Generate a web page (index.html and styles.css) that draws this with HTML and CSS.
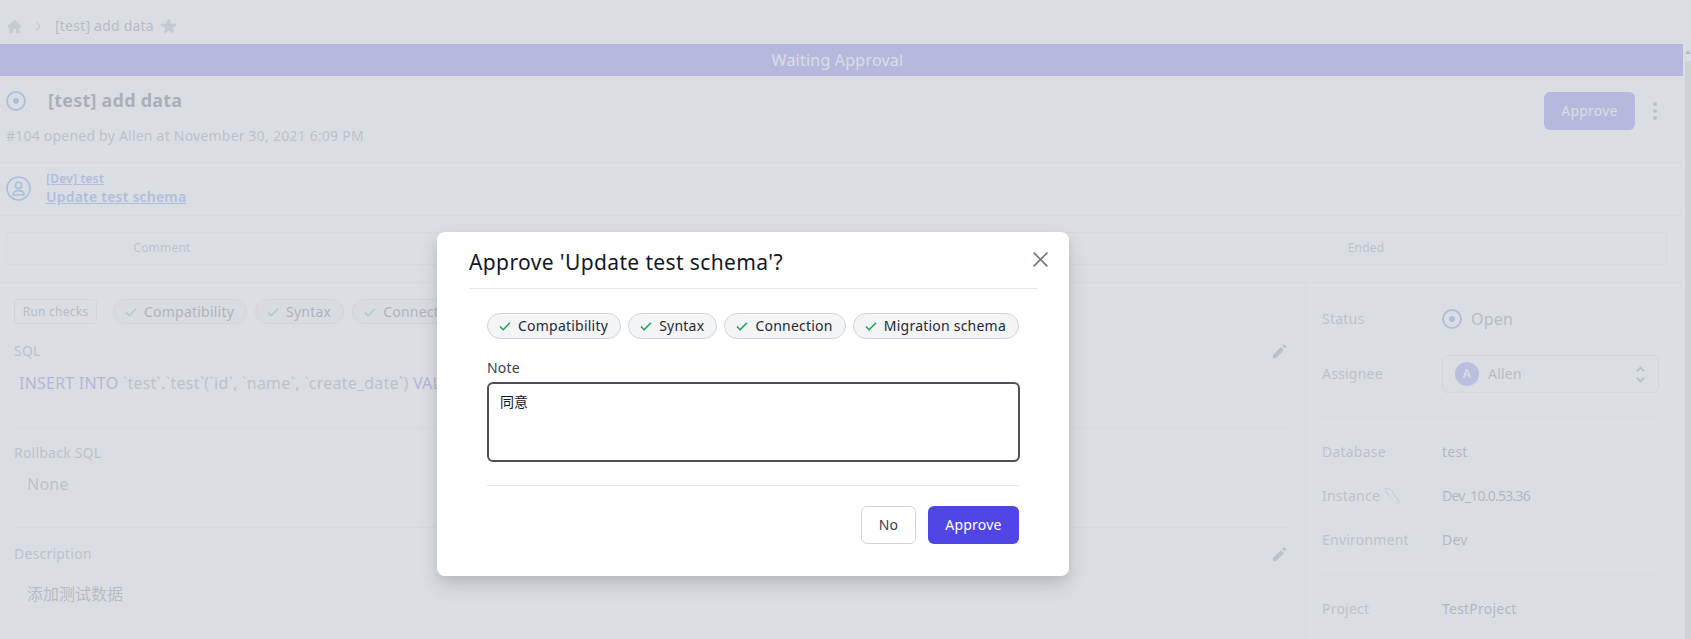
FILE: index.html
```html
<!DOCTYPE html>
<html lang="en">
<head>
<meta charset="utf-8">
<title>[test] add data</title>
<link rel="stylesheet" href="styles.css">
</head>
<body>
<div class="page">
  <nav class="crumbs">
    <svg class="home" viewBox="0 0 20 20" fill="currentColor"><path d="M10.7 2.3a1 1 0 0 0-1.4 0l-7 7A1 1 0 0 0 3 11h1v6a1 1 0 0 0 1 1h2a1 1 0 0 0 1-1v-3a1 1 0 0 1 1-1h2a1 1 0 0 1 1 1v3a1 1 0 0 0 1 1h2a1 1 0 0 0 1-1v-6h1a1 1 0 0 0 .7-1.7l-7-7z"/></svg>
    <svg class="chev" viewBox="0 0 6 10" fill="none" stroke="currentColor" stroke-width="1.2"><path d="M1 1l4 4-4 4"/></svg>
    <span class="crumb-text">[test] add data</span>
    <svg class="star" viewBox="0 0 20 20" fill="currentColor"><path d="M9.05 2.93c.3-.92 1.6-.92 1.9 0l1.27 3.91a1 1 0 0 0 .95.69h4.11c.97 0 1.37 1.24.59 1.81l-3.33 2.42a1 1 0 0 0-.36 1.12l1.27 3.91c.3.92-.76 1.69-1.54 1.12l-3.32-2.42a1 1 0 0 0-1.18 0l-3.32 2.42c-.78.57-1.84-.2-1.54-1.12l1.27-3.91a1 1 0 0 0-.36-1.12L1.13 9.34c-.78-.57-.38-1.81.59-1.81h4.11a1 1 0 0 0 .95-.69l1.27-3.91z"/></svg>
  </nav>
  <div class="frame">
    <main class="main">
      <div class="banner">Waiting Approval</div>
      <header class="head">
        <div class="head-left">
          <div class="title-row">
            <svg class="status-icon" viewBox="0 0 20 20" fill="none"><circle cx="10" cy="10" r="9" stroke="currentColor" stroke-width="2"/><circle cx="10" cy="10" r="3" fill="currentColor"/></svg>
            <h1 class="title">[test] add data</h1>
          </div>
          <p class="sub">#104 opened by Allen at November 30, 2021 6:09 PM</p>
        </div>
        <div class="head-actions">
          <button class="btn-primary">Approve</button>
          <svg class="dots" viewBox="0 0 4 18" fill="currentColor"><circle cx="2" cy="2" r="2"/><circle cx="2" cy="9" r="2"/><circle cx="2" cy="16" r="2"/></svg>
        </div>
      </header>
      <div class="linkrow">
        <svg class="person" viewBox="0 0 24 24" fill="none" stroke="currentColor" stroke-width="1.6"><circle cx="12" cy="12" r="11"/><circle cx="12" cy="9" r="3"/><path d="M6.8 18.2c0-2.8 2-4.2 5.2-4.2s5.2 1.400 5.2 4.200z"/></svg>
        <div class="links">
          <a class="link-small">[Dev] test</a>
          <a class="link-big">Update test schema</a>
        </div>
      </div>
      <section class="stepwrap">
        <div class="steps">
          <span class="step">Comment</span>
          <span class="step"></span>
          <span class="step">Ended</span>
        </div>
      </section>
      <div class="content">
        <div class="left">
          <div class="checks">
            <button class="btn-run">Run checks</button>
            <span class="chip"><svg class="check" viewBox="0 0 14 14" fill="none" stroke="currentColor" stroke-width="1.4"><path d="M2 7.500l3.200 3.200L12 3.800"/></svg>Compatibility</span>
            <span class="chip"><svg class="check" viewBox="0 0 14 14" fill="none" stroke="currentColor" stroke-width="1.4"><path d="M2 7.500l3.200 3.200L12 3.800"/></svg>Syntax</span>
            <span class="chip"><svg class="check" viewBox="0 0 14 14" fill="none" stroke="currentColor" stroke-width="1.4"><path d="M2 7.500l3.200 3.200L12 3.800"/></svg>Connection</span>
          </div>
          <section class="block block-sql">
            <div class="block-head">
              <span class="label">SQL</span>
              <svg class="pencil" viewBox="0 0 20 20" fill="currentColor"><path d="M13.600 3.200a2 2 0 0 1 2.800 2.800l-.8.800-2.800-2.800.8-.8zM11.400 5.400L3 13.800V17h3.200l8.400-8.400-3.200-3.200z"/></svg>
            </div>
            <div class="code"><span class="kw">INSERT INTO</span> `test`.`test`(`id`, `name`, `create_date`) <span class="kw">VALUES</span></div>
          </section>
          <section class="block block-rollback">
            <div class="block-head"><span class="label">Rollback SQL</span></div>
            <div class="none">None</div>
          </section>
          <section class="block block-desc">
            <div class="block-head">
              <span class="label">Description</span>
              <svg class="pencil" viewBox="0 0 20 20" fill="currentColor"><path d="M13.600 3.200a2 2 0 0 1 2.800 2.800l-.8.800-2.800-2.800.8-.8zM11.400 5.400L3 13.800V17h3.200l8.400-8.400-3.200-3.200z"/></svg>
            </div>
            <div class="desc">添加测试数据</div>
          </section>
        </div>
        <aside class="side">
          <div class="side-group side-top">
            <div class="row">
              <span class="label">Status</span>
              <span class="open"><svg class="status-icon" viewBox="0 0 20 20" fill="none"><circle cx="10" cy="10" r="9" stroke="currentColor" stroke-width="2"/><circle cx="10" cy="10" r="3" fill="currentColor"/></svg>Open</span>
            </div>
            <div class="row">
              <span class="label">Assignee</span>
              <div class="select">
                <span class="avatar">A</span><span class="select-text">Allen</span>
                <svg class="updown" viewBox="0 0 10 18" fill="none" stroke="currentColor" stroke-width="1.8"><path d="M1.500 6L5 2.500 8.500 6M1.500 12L5 15.500 8.500 12"/></svg>
              </div>
            </div>
          </div>
          <div class="side-group">
            <div class="row"><span class="label">Database</span><span class="value">test</span></div>
            <div class="row">
              <span class="label label-icon">Instance
                <svg class="dolphin" viewBox="0 0 18 18" fill="none" stroke="currentColor" stroke-width="0.9"><path d="M1 1.500c3.500-.8 6.500.8 8 3.500 1.200 2.200 2 4.800 4.300 7l2 3.500M1.500 1.800c-.5 2.200.8 3.600 2.200 5 1.400 1.500 2.100 3.600 3.500 4.700M11 14.500l2.500 2"/></svg>
              </span>
              <span class="value value-tight">Dev_10.0.53.36</span>
            </div>
            <div class="row"><span class="label">Environment</span><span class="value">Dev</span></div>
          </div>
          <div class="side-group">
            <div class="row"><span class="label">Project</span><span class="value">TestProject</span></div>
          </div>
        </aside>
      </div>
    </main>
    <div class="scrollbar">
      <span class="scroll-arrow"></span>
      <span class="scroll-track"></span>
    </div>
  </div>
  <div class="overlay"></div>
  <div class="modal" role="dialog">
    <div class="modal-head">
      <h2 class="modal-title">Approve 'Update test schema'?</h2>
      <svg class="close" viewBox="0 0 16 16" fill="none" stroke="currentColor" stroke-width="1.500"><path d="M1.500 1.500l13 13M14.500 1.500l-13 13"/></svg>
    </div>
    <div class="modal-body">
      <div class="modal-chips">
        <span class="chip"><svg class="check" viewBox="0 0 14 14" fill="none" stroke="currentColor" stroke-width="1.4"><path d="M2 7.500l3.200 3.200L12 3.800"/></svg>Compatibility</span>
        <span class="chip"><svg class="check" viewBox="0 0 14 14" fill="none" stroke="currentColor" stroke-width="1.4"><path d="M2 7.500l3.200 3.200L12 3.800"/></svg>Syntax</span>
        <span class="chip"><svg class="check" viewBox="0 0 14 14" fill="none" stroke="currentColor" stroke-width="1.4"><path d="M2 7.500l3.200 3.200L12 3.800"/></svg>Connection</span>
        <span class="chip"><svg class="check" viewBox="0 0 14 14" fill="none" stroke="currentColor" stroke-width="1.4"><path d="M2 7.500l3.200 3.200L12 3.800"/></svg>Migration schema</span>
      </div>
      <label class="note-label" for="note">Note</label>
      <textarea id="note" class="note">同意</textarea>
      <div class="modal-foot">
        <button class="btn-no">No</button>
        <button class="btn-primary">Approve</button>
      </div>
    </div>
  </div>
</div>
</body>
</html>
```
FILE: styles.css
```css
* { box-sizing: border-box; }
html, body { margin: 0; padding: 0; }
body {
  background: #fff;
  color: #111827;
  font-family: "Noto Sans", "Noto Sans CJK SC", "Liberation Sans", sans-serif;
  font-size: 14px;
  line-height: 20px;
  letter-spacing: 0.22px;
}
h1, h2, p { margin: 0; }
button { font: inherit; letter-spacing: inherit; cursor: pointer; }
.page { position: relative; width: 1691px; height: 639px; overflow: hidden; }

.crumbs { display: flex; align-items: center; height: 44px; padding: 8px 0 0 6px; color: #6b7280; }
.home { width: 17px; height: 17px; color: #9ca3af; }
.chev { width: 6px; height: 10px; margin-left: 12px; color: #9ca3af; }
.crumb-text { margin-left: 14px; color: #4b5563; }
.star { width: 18px; height: 18px; margin-left: 6px; color: #9ca3af; }

.frame { display: flex; }
.main { width: 1683px; flex: none; }
.scrollbar { display: flex; flex-direction: column; align-items: center; flex: 1; margin-left: 2px; }
.scroll-arrow { width: 0; height: 0; margin-top: 6px; border: 3px solid transparent; border-top: 0; border-bottom: 4px solid #555; }
.scroll-track { width: 100%; height: 600px; margin-top: 7px; background: #c4c4c4; }

.banner { height: 32px; padding-right: 8px; background: #4f46e5; color: #fff; font-size: 16px; font-weight: 400; line-height: 32px; text-align: center; }

.head { display: flex; justify-content: space-between; height: 87px; padding: 15px 0 0 6px; border-bottom: 1px solid #e5e7eb; }
.title-row { display: flex; align-items: center; height: 20px; }
.status-icon { width: 20px; height: 20px; color: #2563eb; }
.title { margin: -2px 0 0 22px; font-size: 18px; font-weight: 700; line-height: 20px; }
.sub { margin-top: 15px; color: #6b7280; }
.head-actions { display: flex; align-items: center; height: 38px; margin-top: 1px; padding-right: 26px; }
.head-actions .dots { width: 4px; height: 18px; margin-left: 18px; color: #6b7280; }
.btn-primary { width: 91px; height: 38px; padding: 0; border: 0; border-radius: 6px; background: #4f46e5; color: #fff; font-weight: 400; }

.linkrow { display: flex; align-items: center; height: 53px; padding: 0 0 1px 6px; border-bottom: 1px solid #e5e7eb; }
.person { width: 25px; height: 25px; color: #2563eb; }
.links { display: flex; flex-direction: column; margin-left: 15px; color: #2563eb; font-weight: 600; text-decoration: underline; }
.link-small { font-size: 12px; line-height: 16px; }
.link-big { line-height: 20px; }

.stepwrap { padding: 16px 16px 17px 6px; border-bottom: 1px solid #e5e7eb; }
.steps { display: grid; grid-template-columns: 310px 1fr 600px; height: 33px; border: 1px solid #e5e7eb; color: #6b7280; font-size: 12px; line-height: 29px; text-align: center; }

.content { display: flex; }
.left { width: 1305px; padding: 16px 16px 0 14px; }
.checks { display: flex; align-items: center; gap: 8px; height: 25px; }
.btn-run { width: 83px; height: 25px; margin-right: 8px; padding: 0; border: 1px solid #d1d5db; border-radius: 4px; background: #fff; color: #4b5563; font-size: 12px; }
.chip { display: inline-flex; align-items: center; flex: none; height: 26px; padding: 0 12px 0 10px; border: 1px solid #d1d5db; border-radius: 13px; background: #f3f4f6; color: #1f2937; white-space: nowrap; }
.checks .chip { height: 25px; }
.check { width: 14px; height: 14px; margin-right: 6px; color: #16a34a; }

.block-head { display: flex; align-items: center; justify-content: space-between; height: 20px; }
.label { color: #6b7280; }
.pencil { width: 19px; height: 19px; color: #6b7280; }
.block-sql { padding: 17px 0 32px; border-bottom: 1px solid #e5e7eb; }
.code { margin: 10px 0 0 5px; color: #6b7280; font-size: 16px; line-height: 24px; white-space: nowrap; }
.kw { color: #4338ca; }
.block-rollback { padding: 15px 0 31px; border-bottom: 1px solid #e5e7eb; }
.none { margin: 9px 0 0 13px; color: #6b7280; font-size: 16px; line-height: 24px; }
.block-desc { padding-top: 16px; }
.desc { margin: 18px 0 0 13px; color: #4b5563; font-size: 16px; line-height: 24px; letter-spacing: 0; }

.side { flex: 1; height: 400px; padding: 0 24px 0 16px; border-left: 1px solid #e5e7eb; }
.side-group { display: flex; flex-direction: column; gap: 24px; padding: 24px 0; border-bottom: 1px solid #e5e7eb; }
.side-group:last-child { border-bottom: 0; }
.row { display: grid; grid-template-columns: 120px 1fr; align-items: center; min-height: 20px; }
.open { display: flex; align-items: center; gap: 9px; height: 24px; color: #4b5563; font-size: 16px; }
.value { color: #374151; }
.value-tight { letter-spacing: -0.75px; }
.label-icon { display: flex; align-items: center; gap: 4px; }
.dolphin { width: 18px; height: 18px; color: #7c93a8; }
.select { display: flex; align-items: center; height: 38px; padding: 0 12px; border: 1px solid #d1d5db; border-radius: 6px; background: #fff; }
.avatar { display: flex; align-items: center; justify-content: center; width: 24px; height: 24px; border-radius: 50%; background: #6366f1; color: #fff; font-size: 12px; font-weight: 600; }
.select-text { flex: 1; margin-left: 9px; color: #4b5563; }
.updown { width: 11px; height: 19px; color: #6b7280; }

.overlay { position: absolute; inset: 0; background: rgba(209, 213, 219, 0.8); }
.modal { position: absolute; left: 437px; top: 232px; width: 632px; height: 344px; padding: 0 32px; border-radius: 8px; background: #fff; box-shadow: 0 10px 20px rgba(0, 0, 0, 0.12), 0 4px 8px rgba(0, 0, 0, 0.06); }
.modal-head { display: flex; align-items: center; justify-content: space-between; height: 57px; border-bottom: 1px solid #e5e7eb; }
.modal-title { margin-top: 3px; color: #111827; font-size: 21px; font-weight: 400; line-height: 28px; letter-spacing: 0.38px; }
.close { width: 17px; height: 17px; margin: -1px -12px 0 0; color: #6b7280; }
.modal-body { padding: 24px 18px 0; }
.modal-chips { display: flex; justify-content: space-between; }
.note-label { display: block; margin-top: 19px; color: #374151; }
.note { display: block; width: 533px; height: 80px; margin: 4px 0 0; padding: 7px 11px; border: 2px solid #4f4f5a; border-radius: 6px; outline: 0; resize: none; background: #fff; color: #111827; font: 14px/20px "Noto Sans CJK SC", sans-serif; }
.modal-foot { display: flex; justify-content: flex-end; gap: 12px; margin-top: 23px; padding-top: 20px; border-top: 1px solid #e5e7eb; }
.btn-no { width: 55px; height: 38px; padding: 0; border: 1px solid #d1d5db; border-radius: 6px; background: #fff; color: #374151; }
```
